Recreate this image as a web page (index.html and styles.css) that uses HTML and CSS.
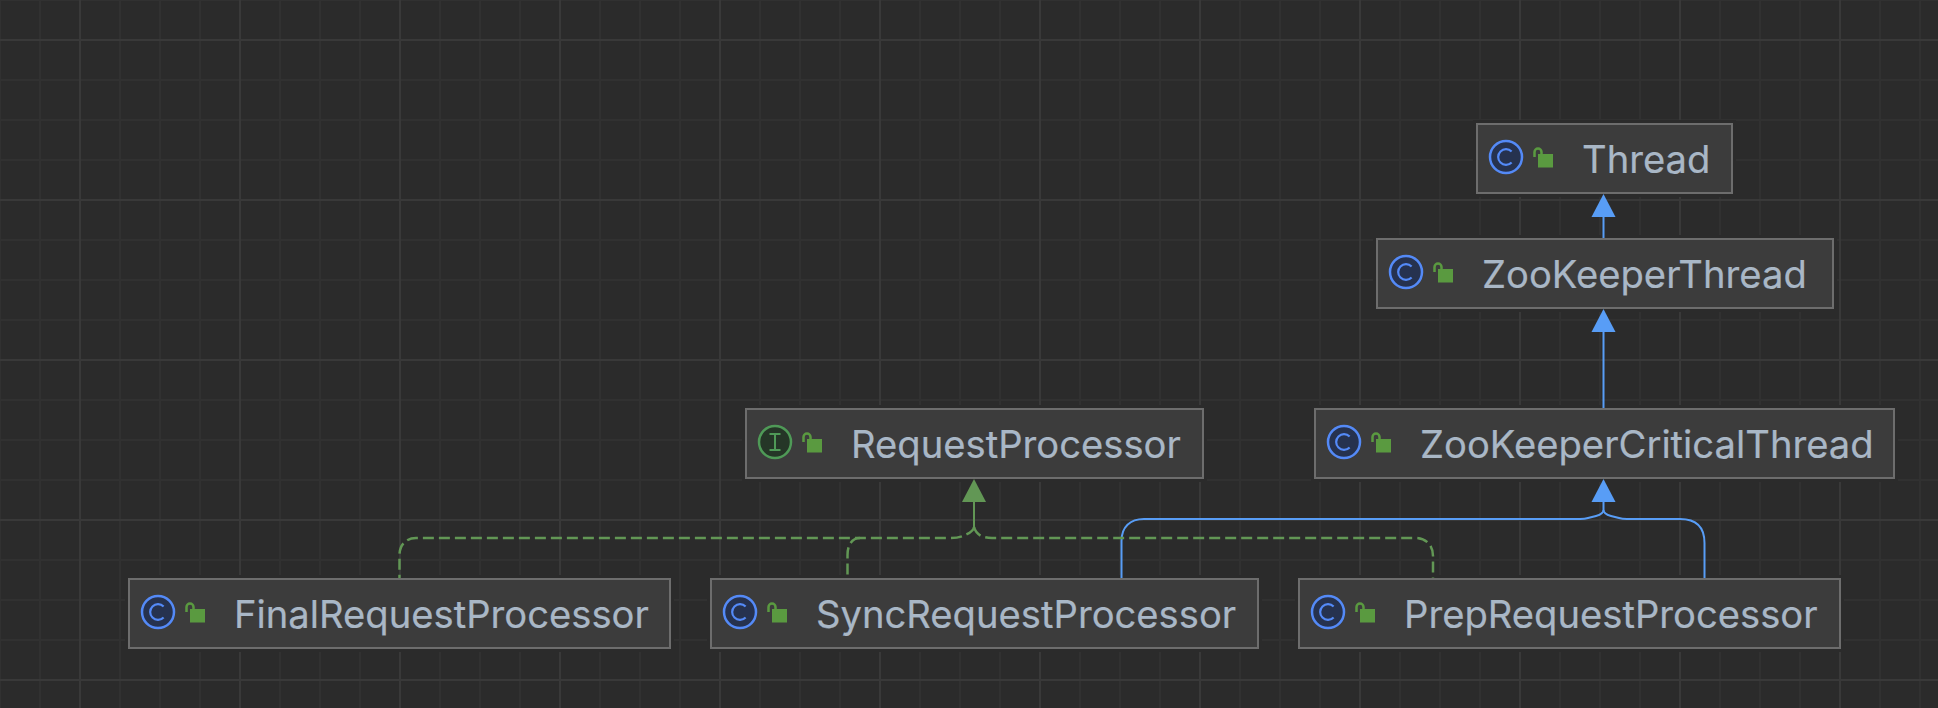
FILE: index.html
```html
<!DOCTYPE html>
<html lang="en">
<head>
<meta charset="utf-8">
<title>Class diagram</title>
<link rel="stylesheet" href="styles.css">
</head>
<body>
<main class="canvas">
  <div class="node n-thread">
    <svg class="kind" viewBox="0 0 36 36"><circle class="c-disc" cx="18" cy="18" r="16"/><path class="c-glyph" d="M23.600 12.600A7.800 7.800 0 1 0 23.600 23.400"/></svg>
    <svg class="lock" viewBox="0 0 22 22"><path class="shackle" d="M1.500 11V6A3.500 3.500 0 0 1 8.500 6V8"/><rect class="lock-body" x="5" y="8" width="15" height="13.500"/></svg>
    <span class="name">Thread</span>
  </div>
  <div class="node n-zkt">
    <svg class="kind" viewBox="0 0 36 36"><circle class="c-disc" cx="18" cy="18" r="16"/><path class="c-glyph" d="M23.600 12.600A7.800 7.800 0 1 0 23.600 23.400"/></svg>
    <svg class="lock" viewBox="0 0 22 22"><path class="shackle" d="M1.500 11V6A3.500 3.500 0 0 1 8.500 6V8"/><rect class="lock-body" x="5" y="8" width="15" height="13.500"/></svg>
    <span class="name">ZooKeeperThread</span>
  </div>
  <div class="node n-zkct">
    <svg class="kind" viewBox="0 0 36 36"><circle class="c-disc" cx="18" cy="18" r="16"/><path class="c-glyph" d="M23.600 12.600A7.800 7.800 0 1 0 23.600 23.400"/></svg>
    <svg class="lock" viewBox="0 0 22 22"><path class="shackle" d="M1.500 11V6A3.500 3.500 0 0 1 8.500 6V8"/><rect class="lock-body" x="5" y="8" width="15" height="13.500"/></svg>
    <span class="name">ZooKeeperCriticalThread</span>
  </div>
  <div class="node n-rp">
    <svg class="kind" viewBox="0 0 36 36"><circle class="i-disc" cx="18" cy="18" r="16"/><path class="i-glyph" d="M12.500 10H23.500M18 10V26M12.500 26H23.500"/></svg>
    <svg class="lock" viewBox="0 0 22 22"><path class="shackle" d="M1.500 11V6A3.500 3.500 0 0 1 8.500 6V8"/><rect class="lock-body" x="5" y="8" width="15" height="13.500"/></svg>
    <span class="name">RequestProcessor</span>
  </div>
  <div class="node n-final">
    <svg class="kind" viewBox="0 0 36 36"><circle class="c-disc" cx="18" cy="18" r="16"/><path class="c-glyph" d="M23.600 12.600A7.800 7.800 0 1 0 23.600 23.400"/></svg>
    <svg class="lock" viewBox="0 0 22 22"><path class="shackle" d="M1.500 11V6A3.500 3.500 0 0 1 8.500 6V8"/><rect class="lock-body" x="5" y="8" width="15" height="13.500"/></svg>
    <span class="name">FinalRequestProcessor</span>
  </div>
  <div class="node n-sync">
    <svg class="kind" viewBox="0 0 36 36"><circle class="c-disc" cx="18" cy="18" r="16"/><path class="c-glyph" d="M23.600 12.600A7.800 7.800 0 1 0 23.600 23.400"/></svg>
    <svg class="lock" viewBox="0 0 22 22"><path class="shackle" d="M1.500 11V6A3.500 3.500 0 0 1 8.500 6V8"/><rect class="lock-body" x="5" y="8" width="15" height="13.500"/></svg>
    <span class="name">SyncRequestProcessor</span>
  </div>
  <div class="node n-prep">
    <svg class="kind" viewBox="0 0 36 36"><circle class="c-disc" cx="18" cy="18" r="16"/><path class="c-glyph" d="M23.600 12.600A7.800 7.800 0 1 0 23.600 23.400"/></svg>
    <svg class="lock" viewBox="0 0 22 22"><path class="shackle" d="M1.500 11V6A3.500 3.500 0 0 1 8.500 6V8"/><rect class="lock-body" x="5" y="8" width="15" height="13.500"/></svg>
    <span class="name">PrepRequestProcessor</span>
  </div>
  <svg class="edges" width="1938" height="708" viewBox="0 0 1938 708" aria-hidden="true">
    <path class="edge blue" d="M1603.500 238V215M1603.500 408V330"/>
    <path class="edge blue" d="M1603.500 500V510Q1603.500 514 1596 516L1588 518Q1585 519 1580 519H1144C1130 519 1121.500 527 1121.500 541V578"/>
    <path class="edge blue" d="M1603.500 510Q1603.500 514 1611 516L1619 518Q1622 519 1627 519H1680C1696 519 1704.500 527 1704.500 543V578"/>
    <path class="edge green dashed" d="M974 527Q974 531 966 534.500Q960 538 950 538H416C406 538 399.500 545 399.500 555V578"/>
    <path class="edge green dashed" d="M860 538C852 538 847.500 545 847.500 555V578"/>
    <path class="edge green dashed" d="M974 527Q977 538 992 538H1415C1426 538 1433 545 1433 556V578"/>
    <path class="edge green" d="M974 500V527"/>
    <polygon class="blue-fill" points="1603.500,194 1615.500,217 1591.500,217"/>
    <polygon class="blue-fill" points="1603.500,309 1615.500,332 1591.500,332"/>
    <polygon class="blue-fill" points="1603.500,479 1615.500,502 1591.500,502"/>
    <polygon class="green-fill" points="974,479 986,502 962,502"/>
  </svg>
</main>
</body>
</html>
```
FILE: styles.css
```css
html, body {
  margin: 0;
  padding: 0;
  background: #2b2b2b;
}
.canvas {
  position: relative;
  width: 1938px;
  height: 708px;
  overflow: hidden;
  background-color: #2b2b2b;
  background-image:
    linear-gradient(to right, #393939 2px, transparent 2px),
    linear-gradient(to bottom, #393939 2px, transparent 2px),
    linear-gradient(to right, #313131 2px, transparent 2px),
    linear-gradient(to bottom, #313131 2px, transparent 2px);
  background-size: 160px 160px, 160px 160px, 40px 40px, 40px 40px;
  background-position: 79px 0, 0 39px, -1px 0, 0 -1px;
}
.edges {
  position: absolute;
  left: 0;
  top: 0;
}
.edge {
  fill: none;
  stroke-width: 2;
}
.blue { stroke: #589df6; }
.green { stroke: #629755; }
.dashed {
  stroke-width: 2.500;
  stroke-dasharray: 11 5;
}
.blue-fill { fill: #589df6; }
.green-fill { fill: #629755; }
.node {
  position: absolute;
  box-sizing: border-box;
  height: 71px;
  display: flex;
  align-items: center;
  padding-left: 10px;
  background: #3c3c3c;
  border: 2px solid #6d6d6d;
  box-shadow: 0 0 0 3px #2b2b2b;
}
.n-thread { left: 1476px; top: 123px; width: 257px; }
.n-zkt { left: 1376px; top: 238px; width: 458px; }
.n-zkct { left: 1314px; top: 408px; width: 581px; }
.n-rp { left: 745px; top: 408px; width: 459px; }
.n-final { left: 128px; top: 578px; width: 543px; }
.n-sync { left: 710px; top: 578px; width: 549px; }
.n-prep { left: 1298px; top: 578px; width: 543px; }
.kind {
  width: 36px;
  height: 36px;
  margin-bottom: 3px;
  flex: none;
}
.lock {
  width: 22px;
  height: 22px;
  margin-left: 9px;
  margin-bottom: 3px;
  flex: none;
}
.c-disc {
  fill: #26324f;
  stroke: #548af7;
  stroke-width: 2.500;
}
.c-glyph {
  fill: none;
  stroke: #548af7;
  stroke-width: 2.200;
}
.i-disc {
  fill: #253627;
  stroke: #4f9a57;
  stroke-width: 2.500;
}
.i-glyph {
  fill: none;
  stroke: #4f9a57;
  stroke-width: 2;
}
.shackle {
  fill: none;
  stroke: #5a9a40;
  stroke-width: 2.500;
}
.lock-body { fill: #5a9a40; }
.name {
  margin-left: 27px;
  font-family: Inter, "Liberation Sans", sans-serif;
  font-size: 38.200px;
  line-height: 44px;
  color: #a9b7c6;
  white-space: nowrap;
  -webkit-text-stroke: 0.200px #a9b7c6;
}
```
